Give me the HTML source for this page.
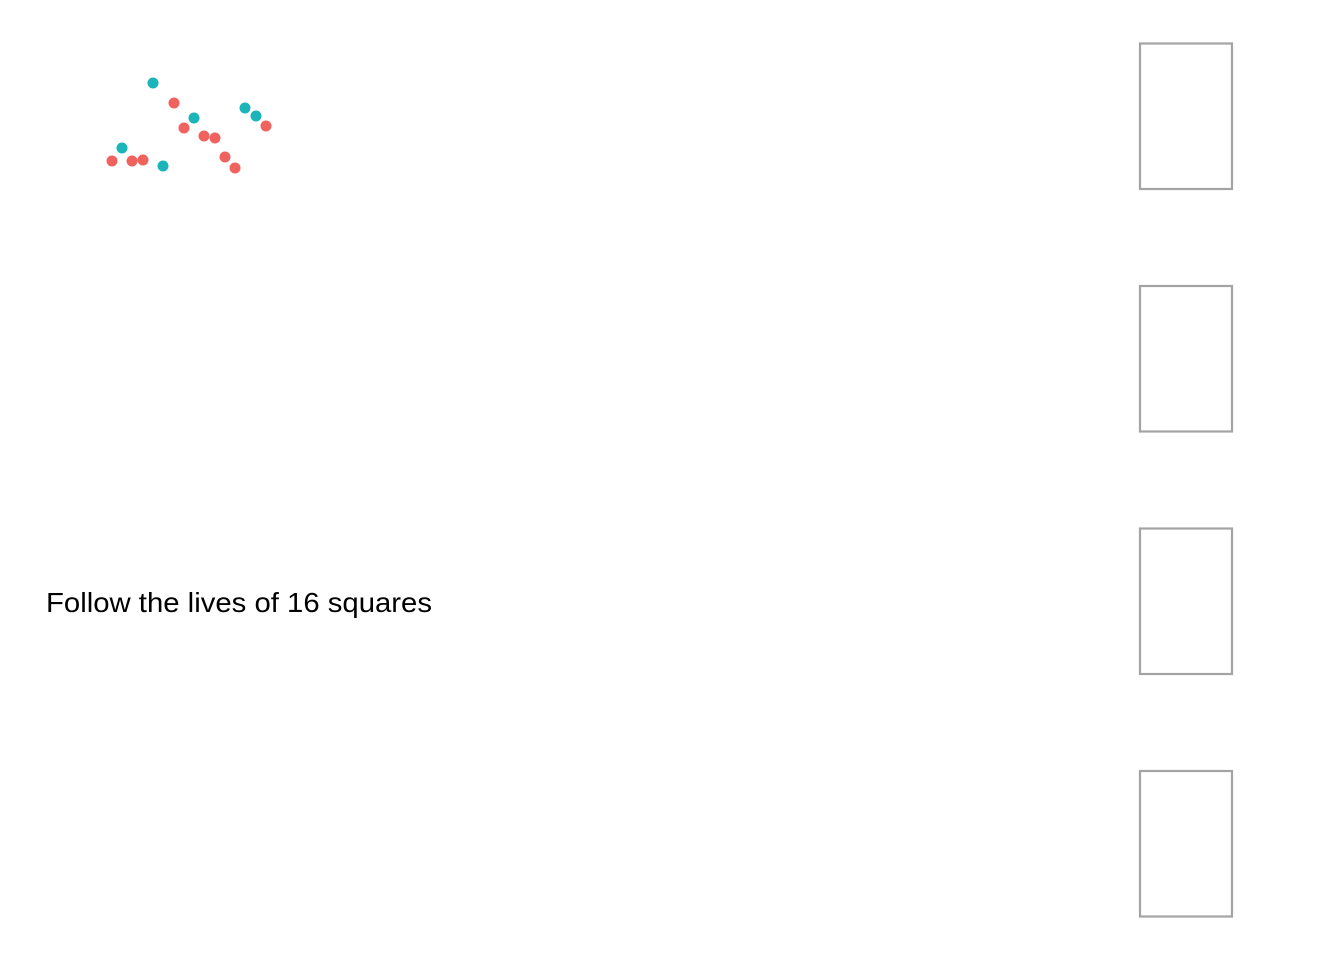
<!DOCTYPE html>
<html><head><meta charset="utf-8"><style>
html,body{margin:0;padding:0;background:#fff;width:1344px;height:960px;overflow:hidden}
</style></head><body>
<svg width="1344" height="960" xmlns="http://www.w3.org/2000/svg">
<g fill="#1ab4b9">
<circle cx="153" cy="83" r="5.5"/><circle cx="194" cy="118" r="5.5"/><circle cx="245" cy="108" r="5.5"/>
<circle cx="256" cy="116" r="5.5"/><circle cx="122" cy="148" r="5.5"/><circle cx="163" cy="166" r="5.5"/>
</g>
<g fill="#f0625d">
<circle cx="174" cy="103" r="5.5"/><circle cx="184" cy="128" r="5.5"/><circle cx="204" cy="136" r="5.5"/>
<circle cx="215" cy="138" r="5.5"/><circle cx="225" cy="157" r="5.5"/><circle cx="235" cy="168" r="5.5"/>
<circle cx="266" cy="126" r="5.5"/><circle cx="112" cy="161" r="5.5"/><circle cx="132" cy="161" r="5.5"/>
<circle cx="143" cy="160" r="5.5"/>
</g>
<g fill="none" stroke="#a3a3a3" stroke-width="2.2">
<rect x="1140" y="43.5" width="92" height="145.5"/>
<rect x="1140" y="286" width="92" height="145.5"/>
<rect x="1140" y="528.5" width="92" height="145.5"/>
<rect x="1140" y="771" width="92" height="145.5"/>
</g>
<text x="46" y="612" font-family="Liberation Sans, sans-serif" font-size="28" textLength="386" lengthAdjust="spacingAndGlyphs" fill="#000">Follow the lives of 16 squares</text>
</svg>
</body></html>
